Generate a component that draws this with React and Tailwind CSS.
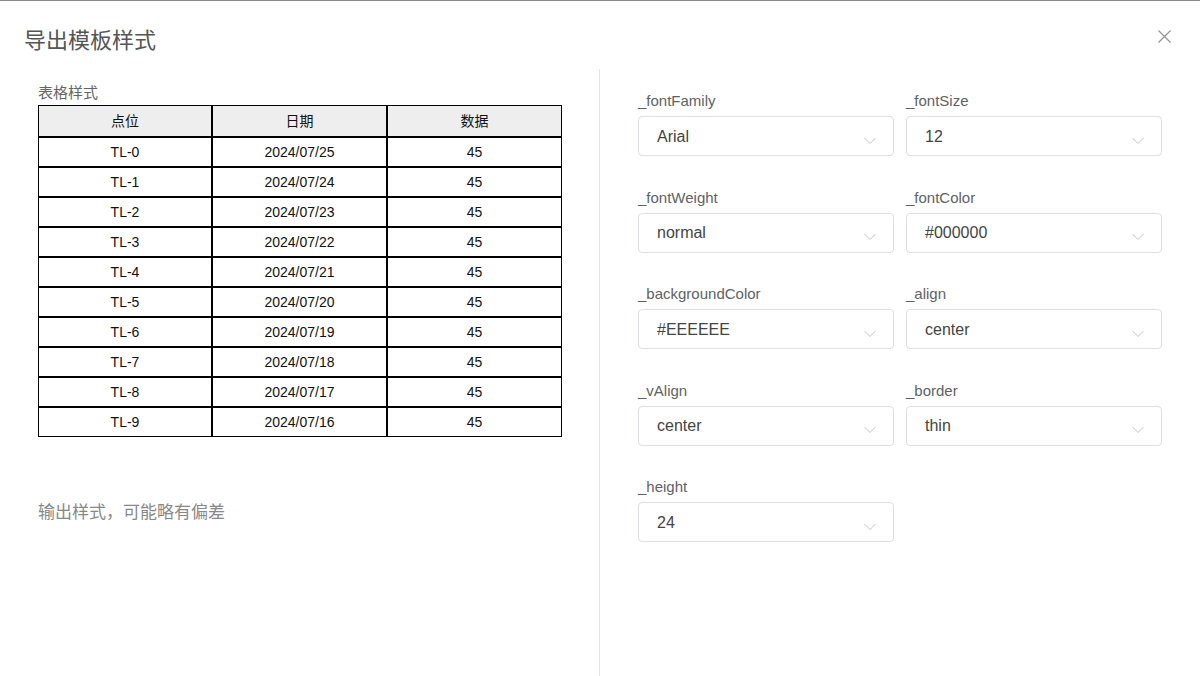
import React from 'react';

const font = { fontFamily: '"Liberation Sans", Arial, "Noto Sans CJK SC", sans-serif' };

const rows = [
  ['TL-0', '2024/07/25', '45'],
  ['TL-1', '2024/07/24', '45'],
  ['TL-2', '2024/07/23', '45'],
  ['TL-3', '2024/07/22', '45'],
  ['TL-4', '2024/07/21', '45'],
  ['TL-5', '2024/07/20', '45'],
  ['TL-6', '2024/07/19', '45'],
  ['TL-7', '2024/07/18', '45'],
  ['TL-8', '2024/07/17', '45'],
  ['TL-9', '2024/07/16', '45'],
];

const fields = [
  { label: '_fontFamily', value: 'Arial' },
  { label: '_fontSize', value: '12' },
  { label: '_fontWeight', value: 'normal' },
  { label: '_fontColor', value: '#000000' },
  { label: '_backgroundColor', value: '#EEEEEE' },
  { label: '_align', value: 'center' },
  { label: '_vAlign', value: 'center' },
  { label: '_border', value: 'thin' },
  { label: '_height', value: '24' },
];

const colW = ['w-[174px]', 'w-[175px]', 'w-[175px]'];

function Chevron() {
  return (
    <svg width="12" height="8" viewBox="0 0 12 8" fill="none" className="shrink-0">
      <path d="M0.5 1 L6 6.5 L11.5 1" stroke="#c0c4cc" strokeWidth="1" />
    </svg>
  );
}

function Field({ label, value }) {
  return (
    <div className="flex flex-col">
      <div className="h-[20px] leading-[20px] text-[15px] text-[#606266]">{label}</div>
      <div className="mt-[5px] h-[40px] rounded-[4px] border border-[#dcdfe6] flex items-center justify-between pl-[18px] pr-[17px]">
        <span className="text-[16px] text-[#444] pt-[1px]">{value}</span>
        <div className="mt-[9px]">
          <Chevron />
        </div>
      </div>
    </div>
  );
}

export default function App() {
  return (
    <div className="w-[1200px] h-[676px] bg-white border-t border-[#8a8a8a] overflow-hidden flex flex-col" style={font}>
      {/* Header */}
      <div className="h-[68px] shrink-0 flex items-start justify-between pl-[24px] pr-[29px] pt-[26px]">
        <h1 className="text-[22px] text-[#555] leading-[28px] font-normal">导出模板样式</h1>
        <svg width="13" height="13" viewBox="0 0 13 13" fill="none" className="mt-[3px]">
          <path d="M0.5 0.5 L12.5 12.5 M12.5 0.5 L0.5 12.5" stroke="#909399" strokeWidth="1.2" />
        </svg>
      </div>

      {/* Body */}
      <div className="flex flex-1">
        {/* Left panel */}
        <div className="w-[600px] shrink-0 border-r border-[#e4e4e4] pl-[38px] pt-[14px]">
          <div className="text-[15px] leading-[20px] text-[#666] mb-[2px]">表格样式</div>
          <div className="flex flex-col w-[524px] text-[14px] text-[#111]">
            <div className="flex h-[32px] bg-[#eeeeee]">
              {['点位', '日期', '数据'].map((h, i) => (
                <div key={h} className={`${colW[i]} border border-black flex items-center justify-center`}>
                  {h}
                </div>
              ))}
            </div>
            {rows.map((r) => (
              <div key={r[0]} className="flex h-[30px]">
                {r.map((c, i) => (
                  <div key={i} className={`${colW[i]} border border-black flex items-center justify-center`}>
                    {c}
                  </div>
                ))}
              </div>
            ))}
          </div>
          <div className="mt-[64px] text-[17px] leading-[24px] text-[#888]">输出样式，可能略有偏差</div>
        </div>

        {/* Right panel */}
        <div className="flex-1 pl-[38px] pr-[38px] pt-[22px]">
          <div className="grid grid-cols-2 gap-x-[12px] gap-y-[31.5px]">
            {fields.map((f) => (
              <Field key={f.label} label={f.label} value={f.value} />
            ))}
          </div>
        </div>
      </div>
    </div>
  );
}
